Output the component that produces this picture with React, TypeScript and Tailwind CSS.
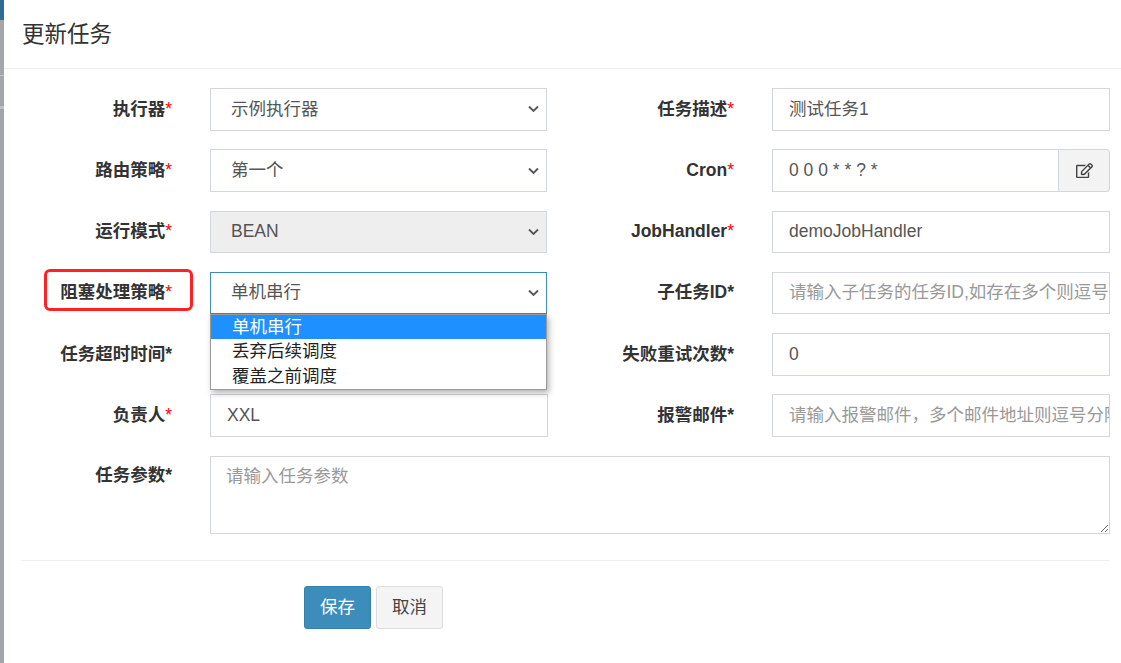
import { FaRegEdit } from "react-icons/fa";

const Chevron = () => (
  <svg className="absolute right-[7px] top-1/2 -translate-y-1/2" width="11" height="7" viewBox="0 0 11 7">
    <polyline points="1,1 5.5,5.5 10,1" fill="none" stroke="#555" strokeWidth="1.8" />
  </svg>
);

const Label = ({ text, red, width }: { text: string; red?: boolean; width: string }) => (
  <div className={`${width} h-[42.5px] flex items-center justify-end font-bold text-[17.5px] text-[#333] leading-none`}>
    {text}
    <span className={red ? "text-[#ff0000] font-normal" : ""}>*</span>
  </div>
);

const Select = ({ value, disabled, focused }: { value: string; disabled?: boolean; focused?: boolean }) => (
  <div
    className={`relative w-[337px] h-[42.5px] border flex items-center pl-[20px] text-[17.5px] text-[#555] leading-none ${
      disabled ? "bg-[#eeeeee]" : "bg-white"
    } ${focused ? "border-[#3c8dbc]" : "border-[#d2d6de]"}`}
  >
    {value}
    <Chevron />
  </div>
);

const Input = ({ value, placeholder }: { value?: string; placeholder?: string }) => (
  <div className="w-[338px] h-[42.5px] border border-[#d2d6de] bg-white flex items-center pl-[16px] pr-[12px] text-[17.5px] leading-none overflow-hidden whitespace-nowrap">
    {value ? <span className="text-[#555]">{value}</span> : <span className="text-[#999]">{placeholder}</span>}
  </div>
);

const App = () => {
  return (
    <div className="w-[1121px] h-[663px] overflow-hidden flex bg-white font-['Liberation_Sans','Noto_Sans_CJK_SC',sans-serif]">
      <div className="w-[4px] shrink-0 flex flex-col">
        <div className="h-[20px] bg-[#2f6c93]" />
        <div className="h-[55px] bg-[#a4a6a9]" />
        <div className="h-[1px] bg-[#c8c9cb]" />
        <div className="h-[30px] bg-[#a4a6a9]" />
        <div className="h-[3px] bg-[#c0c1c3]" />
        <div className="flex-1 bg-[#a2a4a7]" />
      </div>

      <div className="flex-1 relative">
        <div className="h-[69px] border-b border-[#f0f0f0] flex items-center pl-[18px] pt-[3px] text-[22.5px] text-[#333] leading-none">
          更新任务
        </div>

        <div className="pt-[19px] flex flex-col gap-[18.75px]">
          <div className="flex">
            <Label width="w-[168px]" text="执行器" red />
            <div className="ml-[38px]"><Select value="示例执行器" /></div>
            <Label width="w-[187px]" text="任务描述" red />
            <div className="ml-[38px]"><Input value="测试任务1" /></div>
          </div>

          <div className="flex">
            <Label width="w-[168px]" text="路由策略" red />
            <div className="ml-[38px]"><Select value="第一个" /></div>
            <Label width="w-[187px]" text="Cron" red />
            <div className="ml-[38px] flex">
              <div className="w-[287px] h-[42.5px] border border-[#d2d6de] flex items-center pl-[16px] text-[17.5px] text-[#555] leading-none">
                0 0 0 * * ? *
              </div>
              <div className="w-[51px] h-[42.5px] border border-l-0 border-[#d2d6de] bg-[#f3f3f3] rounded-r-[4px] flex items-center justify-center text-[#444]">
                <FaRegEdit size={17} />
              </div>
            </div>
          </div>

          <div className="flex">
            <Label width="w-[168px]" text="运行模式" red />
            <div className="ml-[38px]"><Select value="BEAN" disabled /></div>
            <Label width="w-[187px]" text="JobHandler" red />
            <div className="ml-[38px]"><Input value="demoJobHandler" /></div>
          </div>

          <div className="flex relative z-10">
            <div className="relative">
              <Label width="w-[168px]" text="阻塞处理策略" red />
              <div className="absolute left-[40px] top-[-3px] w-[149px] h-[42px] border-[3px] border-[#ff2222] rounded-[6px]" />
            </div>
            <div className="ml-[38px] relative">
              <Select value="单机串行" focused />
              <div className="absolute left-0 top-full w-[337px] bg-white border border-[#9a9a9a] shadow-[2px_3px_6px_rgba(0,0,0,0.3)] text-[17.5px] leading-none text-[#222]">
                <div className="h-[24px] bg-[#1e90ff] text-white flex items-center pl-[21px]">单机串行</div>
                <div className="h-[25px] flex items-center pl-[21px]">丢弃后续调度</div>
                <div className="h-[25px] flex items-center pl-[21px]">覆盖之前调度</div>
              </div>
            </div>
            <Label width="w-[187px]" text="子任务ID" />
            <div className="ml-[38px]"><Input placeholder="请输入子任务的任务ID,如存在多个则逗号分隔" /></div>
          </div>

          <div className="flex">
            <Label width="w-[168px]" text="任务超时时间" />
            <div className="ml-[38px] w-[337px] h-[42.5px] border border-[#d2d6de]" />
            <Label width="w-[187px]" text="失败重试次数" />
            <div className="ml-[38px]"><Input value="0" /></div>
          </div>

          <div className="flex">
            <Label width="w-[168px]" text="负责人" red />
            <div className="ml-[38px]"><Input value="XXL" /></div>
            <Label width="w-[186px]" text="报警邮件" />
            <div className="ml-[38px]"><Input placeholder="请输入报警邮件，多个邮件地址则逗号分隔" /></div>
          </div>

          <div className="flex">
            <div className="w-[168px] pt-[11px] text-right font-bold text-[17.5px] text-[#333] leading-none">任务参数*</div>
            <textarea
              readOnly
              rows={3}
              placeholder="请输入任务参数"
              className="ml-[38px] w-[900px] h-[78px] border border-[#d2d6de] px-[15px] pt-[7px] text-[17.5px] leading-[25px] text-[#555] placeholder:text-[#999] outline-none"
            />
          </div>
        </div>

        <div className="ml-[18px] w-[1088px] mt-[26px] border-t border-[#eeeeee]" />

        <div className="mt-[25.5px] ml-[300px] flex gap-[5px]">
          <button className="h-[42.5px] px-[15px] bg-[#3c8dbc] border border-[#367fa9] rounded-[3px] text-white text-[17.5px] leading-none">
            保存
          </button>
          <button className="h-[42.5px] px-[15px] bg-[#f4f4f4] border border-[#dddddd] rounded-[3px] text-[#444] text-[17.5px] leading-none">
            取消
          </button>
        </div>
      </div>
    </div>
  );
};

export default App;
